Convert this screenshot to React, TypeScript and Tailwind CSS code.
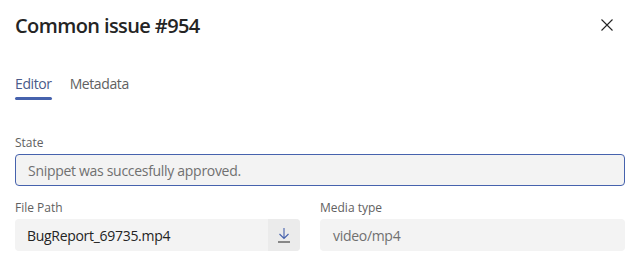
import React from "react";

export default function App() {
  return (
    <div className="w-[637px] h-[263px] bg-white text-[#242424] overflow-hidden" style={{ fontFamily: '"Open Sans", "Noto Sans", sans-serif' }}>
      <div className="flex items-start justify-between pl-[15px] pr-[24px] pt-[12px]">
        <h1 className="text-[20px] leading-[28px] font-semibold text-[#242424] tracking-[-0.6px]">Common issue #954</h1>
        <button className="mt-[7px] w-[12px] h-[12px] text-[#242424]">
          <svg width="12" height="12" viewBox="0 0 12 12" fill="none" stroke="currentColor" strokeWidth="1.1">
            <path d="M0.5 0.5L11.5 11.5M11.5 0.5L0.5 11.5" />
          </svg>
        </button>
      </div>
      <div className="flex gap-[18px] pl-[15px] mt-[34px] tracking-[-0.4px]">
        <div className="flex flex-col">
          <span className="text-[14px] leading-[20px] text-[#4a5a8a]">Editor</span>
          <div className="mt-[3px] h-[3px] rounded-full bg-[#4662ad]" />
        </div>
        <span className="text-[14px] leading-[20px] text-[#616161]">Metadata</span>
      </div>
      <div className="px-[15px] pr-[12px] mt-[35px] flex flex-col">
        <label className="text-[12px] leading-[16px] text-[#616161]">State</label>
        <div className="mt-[3px] h-[32px] rounded-[4px] border border-[#4662ad] bg-[#f3f3f3] flex items-center pl-[12px] text-[14px] text-[#707070] tracking-[-0.3px]">
          Snippet was succesfully approved.
        </div>
        <div className="mt-[14px] grid grid-cols-[285px_1fr] gap-[20px]">
          <div className="flex flex-col">
            <label className="text-[12px] leading-[16px] text-[#616161]">File Path</label>
            <div className="mt-[3px] h-[32px] rounded-[4px] bg-[#f3f3f3] flex items-stretch overflow-hidden">
              <div className="flex-1 flex items-center pl-[12px] text-[14px] text-[#242424] tracking-[-0.3px]">BugReport_69735.mp4</div>
              <div className="w-[32px] bg-[#ebebeb] flex items-center justify-center">
                <svg width="14" height="16" viewBox="0 0 14 16" fill="none" strokeWidth="1.1">
                  <path d="M7 1V11.5M2.5 7L7 11.5L11.5 7" stroke="#4662ad" />
                  <path d="M1 15H13" stroke="#242424" />
                </svg>
              </div>
            </div>
          </div>
          <div className="flex flex-col">
            <label className="text-[12px] leading-[16px] text-[#616161]">Media type</label>
            <div className="mt-[3px] h-[32px] rounded-[4px] bg-[#f3f3f3] flex items-center pl-[13px] text-[14px] text-[#707070] tracking-[-0.3px]">video/mp4</div>
          </div>
        </div>
      </div>
    </div>
  );
}
